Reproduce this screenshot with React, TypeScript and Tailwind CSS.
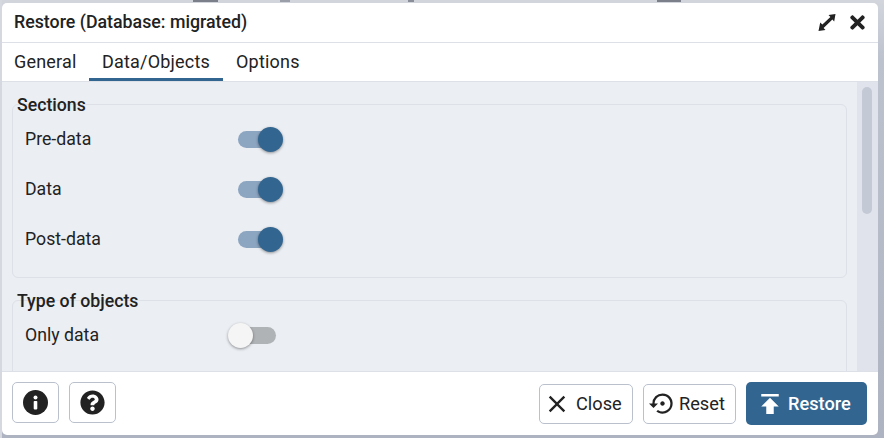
import { MdClose, MdOutlineSettingsBackupRestore, MdPublish } from 'react-icons/md';
import { FaTimes, FaQuestionCircle } from 'react-icons/fa';

const font = "[font-family:Roboto,'Liberation_Sans',sans-serif]";

function Toggle({ on }: { on: boolean }) {
  return (
    <div className={`relative w-[38px] h-[17px] rounded-full ${on ? 'bg-[#8ca5c1]' : 'bg-[#b0b3b6]'}`}>
      <span
        className={`absolute top-[-4px] w-[25px] h-[25px] rounded-full shadow-[0_1px_3px_rgba(0,0,0,0.4)] ${
          on ? 'left-[20px] bg-[#326690]' : 'left-[-10px] bg-[#f5f5f5]'
        }`}
      />
    </div>
  );
}

function Row({ label, on }: { label: string; on: boolean }) {
  return (
    <div className="flex items-center h-[50px] pl-[12px]">
      <span className="w-[213px] text-[17.7px] text-[#222222]">{label}</span>
      <Toggle on={on} />
    </div>
  );
}

function Group({ title, children, className }: { title: string; children: React.ReactNode; className: string }) {
  return (
    <div className={`border border-[#dde0e6] rounded-[6px] ${className}`}>
      <div className="-mt-[9px] h-[18px] pl-[4px] text-[17.7px] leading-[19px] font-medium text-[#222222]">{title}</div>
      {children}
    </div>
  );
}

function InfoGlyph() {
  return (
    <svg width="25" height="25" viewBox="0 0 25 25">
      <circle cx="12.5" cy="12.5" r="12.5" fill="#222222" />
      <circle cx="12.5" cy="7.6" r="2" fill="#ffffff" />
      <rect x="10.7" y="11" width="3.6" height="8.4" rx="0.8" fill="#ffffff" />
    </svg>
  );
}

function ExpandGlyph() {
  return (
    <svg width="18" height="17" viewBox="0 0 18 17" fill="#222222">
      <path d="M17.5 0 L10.5 1 L12.4 2.9 L4.4 10.4 L2.2 8.4 L0.5 17 L7.5 16 L5.6 14 L14.4 5.6 L16.2 7.4 Z" />
    </svg>
  );
}

export default function App() {
  return (
    <div className={`relative w-[884px] h-[438px] overflow-hidden border-l-[2px] border-[#d5d8df] bg-[linear-gradient(to_bottom,#d2d5dc_0px,#bcc2ce_60px,#adb3c0_100%)] ${font}`}>
      {/* page behind the dialog */}
      <div className="flex h-[3px] bg-[#d2d5dc] overflow-hidden">
        <span className="ml-[191px] w-[25px] h-[2px] bg-[#7a7f8a]" />
        <span className="ml-[62px] w-[10px] h-[2px] bg-[#9a9ea8]" />
        <span className="ml-[118px] w-[6px] h-[2px] bg-[#8a8e99]" />
        <span className="ml-[243px] w-[24px] h-[2px] bg-[#7a7f8a]" />
      </div>

      <div className="w-[876px] h-[432px] flex flex-col bg-white rounded-[5px] overflow-hidden">
        <div className="flex items-center h-[40px] shrink-0 pl-[12px] pr-[10px] border-b border-[#dde0e6]">
          <span className="text-[17.8px] font-medium text-[#222222]">Restore (Database: migrated)</span>
          <span className="ml-auto mr-[11px] flex"><ExpandGlyph /></span>
          <FaTimes size={21} className="text-[#222222]" />
        </div>

        <div className="flex h-[39px] shrink-0 border-b border-[#dde0e6] text-[18px] tracking-[0.2px] text-[#222222]">
          <div className="flex items-center w-[87px] pl-[12px] pb-[2px]">General</div>
          <div className="flex items-center w-[134px] justify-center pt-[1px] border-b-[3px] border-[#326690]">Data/Objects</div>
          <div className="flex items-center pl-[13px] pb-[2px]">Options</div>
        </div>

        <div className="flex flex-1 min-h-0 bg-[#ebeef3]">
          <div className="flex-1 min-w-0 pl-[10px] pr-[10px] pt-[22px] overflow-hidden">
            <Group title="Sections" className="h-[174px] mb-[22px]">
              <Row label="Pre-data" on />
              <Row label="Data" on />
              <Row label="Post-data" on />
            </Group>
            <Group title="Type of objects" className="h-[100px]">
              <Row label="Only data" on={false} />
            </Group>
          </div>
          <div className="w-[21px] shrink-0 bg-[#e0e3eb] pt-[5px] pl-[5px]">
            <div className="w-[10px] h-[127px] rounded-full bg-[#c3c9d5]" />
          </div>
        </div>

        <div className="flex items-center h-[64px] shrink-0 pl-[10px] pr-[11px] border-t border-[#dde0e6] text-[#222222]">
          <button className="flex items-center justify-center w-[47px] h-[41px] mb-[2px] border border-[#bac1cd] rounded-[5px] mr-[10px]">
            <InfoGlyph />
          </button>
          <button className="flex items-center justify-center w-[47px] h-[41px] mb-[2px] border border-[#bac1cd] rounded-[5px]">
            <FaQuestionCircle size={25} />
          </button>
          <button className="ml-auto flex items-center pl-[3px] gap-[5px] w-[94px] h-[40px] border border-[#bac1cd] rounded-[5px] text-[18.2px]">
            <MdClose size={28} />
            Close
          </button>
          <button className="ml-[10px] flex items-center pl-[5px] gap-[3px] w-[93px] h-[40px] border border-[#bac1cd] rounded-[5px] text-[18.2px]">
            <MdOutlineSettingsBackupRestore size={27} />
            Reset
          </button>
          <button className="ml-[10px] flex items-center pl-[9px] gap-[3px] w-[121px] h-[43px] bg-[#326690] rounded-[5px] text-[18.2px] font-medium text-white">
            <MdPublish size={30} />
            Restore
          </button>
        </div>
      </div>
    </div>
  );
}
